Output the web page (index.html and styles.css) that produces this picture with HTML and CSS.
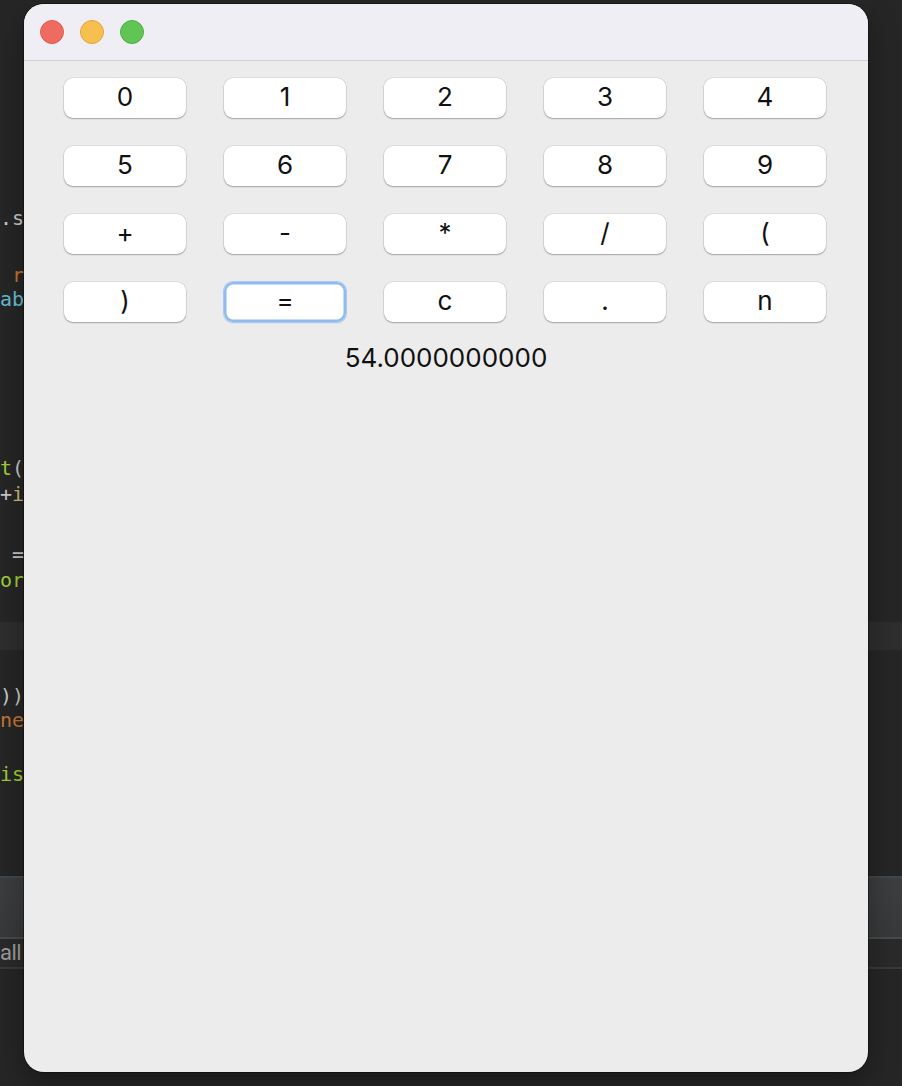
FILE: index.html
```html
<!DOCTYPE html>
<html>
<head>
<meta charset="utf-8">
<link rel="stylesheet" href="styles.css">
</head>
<body>
<div class="desktop">
  <div class="editor">
    <div class="ln first"><div class="code"><span class="fg">self.s</span></div></div>
    <div class="ln gap33"><div class="code"><span class="fg">x: </span><span class="orange">r</span></div></div>
    <div class="ln"><div class="code"><span class="cyan">lab</span></div></div>
    <div class="ln gap145"><div class="code"><span class="green">print</span><span class="fg">(</span></div></div>
    <div class="ln gap2"><div class="code"><span class="fg">++</span><span class="olive">i</span></div></div>
    <div class="ln gap36"><div class="code"><span class="fg">  =</span></div></div>
    <div class="ln gap2"><div class="code"><span class="green">tor</span></div></div>
    <div class="band"></div>
    <div class="ln gap34"><div class="code"><span class="fg">()))</span></div></div>
    <div class="ln"><div class="code"><span class="orange">one</span></div></div>
    <div class="ln gap30"><div class="code"><span class="green">this</span></div></div>
    <div class="panel"></div>
    <div class="tabs"><div class="tabtext">all</div></div>
  </div>

  <div class="window">
    <div class="titlebar">
      <span class="light red"></span>
      <span class="light yellow"></span>
      <span class="light green-l"></span>
    </div>
    <div class="content">
      <div class="keys">
        <button class="key">0</button>
        <button class="key">1</button>
        <button class="key">2</button>
        <button class="key">3</button>
        <button class="key">4</button>
        <button class="key">5</button>
        <button class="key">6</button>
        <button class="key">7</button>
        <button class="key">8</button>
        <button class="key">9</button>
        <button class="key">+</button>
        <button class="key">-</button>
        <button class="key">*</button>
        <button class="key">/</button>
        <button class="key">(</button>
        <button class="key">)</button>
        <button class="key focused">=</button>
        <button class="key">c</button>
        <button class="key">.</button>
        <button class="key">n</button>
      </div>
      <div class="result">54.0000000000</div>
    </div>
  </div>
</div>
</body>
</html>
```
FILE: styles.css
```css
html, body {
  margin: 0;
  padding: 0;
  background: #262626;
}
.desktop {
  position: relative;
  width: 902px;
  height: 1086px;
  overflow: hidden;
  background: #262626;
}
.editor {
  display: flex;
  flex-direction: column;
  padding-top: 206px;
  font-family: "DejaVu Sans Mono", monospace;
  font-size: 20px;
}
.ln {
  height: 24px;
  line-height: 24px;
  display: flex;
}
.code {
  width: 24px;
  display: flex;
  justify-content: flex-end;
  overflow: hidden;
  white-space: pre;
}
.code span { flex: none; white-space: pre; }
.gap33 { margin-top: 33px; }
.gap145 { margin-top: 145px; }
.gap2 { margin-top: 2px; }
.gap36 { margin-top: 36px; }
.gap34 { margin-top: 34px; }
.gap30 { margin-top: 30px; }
.band {
  margin-top: 30px;
  height: 28px;
  background: #2e2e2e;
}
.fg { color: #c9c9c9; }
.orange { color: #c47632; }
.cyan { color: #67bfd6; }
.green { color: #9fcf38; }
.olive { color: #cdbf72; }
.panel {
  margin-top: 90px;
  height: 59px;
  border-top: 2px solid #41474a;
  border-bottom: 2px solid #494a4b;
  background: linear-gradient(#3c3e40, #38393b);
}
.tabs {
  height: 28px;
  border-bottom: 2px solid #3a3a3a;
  background: #2a2a2a;
  display: flex;
}
.tabtext {
  width: 24px;
  overflow: hidden;
  font-family: Roboto, "Liberation Sans", sans-serif;
  font-size: 22px;
  line-height: 28px;
  color: #9c9c9c;
  white-space: pre;
  letter-spacing: -0.5px;
}

.window {
  position: absolute;
  left: 24px;
  top: 4px;
  width: 844px;
  height: 1068px;
  border-radius: 20px;
  overflow: hidden;
  background: #ececec;
  box-shadow: 0 0 0 1px rgba(0,0,0,0.35), 0 12px 30px rgba(0,0,0,0.35);
  display: flex;
  flex-direction: column;
}
.titlebar {
  height: 56px;
  flex: none;
  background: #f0eef5;
  border-bottom: 1px solid #d2d1d4;
  display: flex;
  align-items: center;
  gap: 16px;
  padding-left: 16px;
}
.light {
  width: 24px;
  height: 24px;
  border-radius: 50%;
  box-sizing: border-box;
}
.red { background: #ef6b5f; border: 1px solid #dd5a4f; }
.yellow { background: #f6bf4f; border: 1px solid #dea73c; }
.green-l { background: #61c554; border: 1px solid #51ad45; }

.content {
  flex: 1;
  display: flex;
  flex-direction: column;
  align-items: stretch;
}
.keys {
  display: grid;
  grid-template-columns: repeat(5, 122px);
  grid-auto-rows: 40px;
  column-gap: 38px;
  row-gap: 28px;
  padding: 17px 0 0 40px;
}
.key {
  margin: 0;
  padding: 0 0 3px 0;
  border: none;
  background: #ffffff;
  border-radius: 9px;
  box-shadow: 0 0 0 0.5px rgba(0,0,0,0.12), 0 1px 1.5px rgba(0,0,0,0.28);
  font-family: Inter, "Noto Sans", sans-serif;
  font-size: 26px;
  color: #111;
  display: flex;
  align-items: center;
  justify-content: center;
  line-height: normal;
}
.key.focused {
  box-shadow: 0 0 0 1px #a9cbf3, inset 0 0 0 2.5px #8fbbef, 0 1px 1.5px rgba(0,0,0,0.2);
}
.result {
  margin-top: 18px;
  text-align: center;
  font-family: Inter, "Noto Sans", sans-serif;
  font-size: 26px;
  line-height: 36px;
  color: #111;
}
```
